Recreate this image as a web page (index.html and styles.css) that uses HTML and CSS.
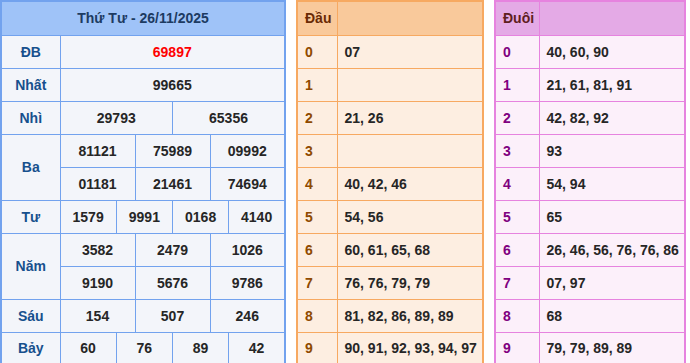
FILE: index.html
```html
<!DOCTYPE html>
<html lang="vi">
<head>
<meta charset="utf-8">
<title>KQXS Thứ Tư - 26/11/2025</title>
<link rel="stylesheet" href="styles.css">
</head>
<body>
<div class="wrap">
  <table class="kq">
    <colgroup>
      <col class="c-label">
      <col span="12">
    </colgroup>
    <tr><th colspan="13" class="title">Thứ Tư - 26/11/2025</th></tr>
    <tr><td class="lbl">ĐB</td><td colspan="12" class="db">69897</td></tr>
    <tr><td class="lbl">Nhất</td><td colspan="12">99665</td></tr>
    <tr><td class="lbl">Nhì</td><td colspan="6">29793</td><td colspan="6">65356</td></tr>
    <tr><td class="lbl" rowspan="2">Ba</td><td colspan="4">81121</td><td colspan="4">75989</td><td colspan="4">09992</td></tr>
    <tr><td colspan="4">01181</td><td colspan="4">21461</td><td colspan="4">74694</td></tr>
    <tr><td class="lbl">Tư</td><td colspan="3">1579</td><td colspan="3">9991</td><td colspan="3">0168</td><td colspan="3">4140</td></tr>
    <tr><td class="lbl" rowspan="2">Năm</td><td colspan="4">3582</td><td colspan="4">2479</td><td colspan="4">1026</td></tr>
    <tr><td colspan="4">9190</td><td colspan="4">5676</td><td colspan="4">9786</td></tr>
    <tr><td class="lbl">Sáu</td><td colspan="4">154</td><td colspan="4">507</td><td colspan="4">246</td></tr>
    <tr><td class="lbl">Bảy</td><td colspan="3">60</td><td colspan="3">76</td><td colspan="3">89</td><td colspan="3">42</td></tr>
  </table>

  <table class="lt dau">
    <colgroup><col class="c-key"><col></colgroup>
    <tr><th>Đầu</th><th></th></tr>
    <tr><td class="key">0</td><td>07</td></tr>
    <tr><td class="key">1</td><td></td></tr>
    <tr><td class="key">2</td><td>21, 26</td></tr>
    <tr><td class="key">3</td><td></td></tr>
    <tr><td class="key">4</td><td>40, 42, 46</td></tr>
    <tr><td class="key">5</td><td>54, 56</td></tr>
    <tr><td class="key">6</td><td>60, 61, 65, 68</td></tr>
    <tr><td class="key">7</td><td>76, 76, 79, 79</td></tr>
    <tr><td class="key">8</td><td>81, 82, 86, 89, 89</td></tr>
    <tr><td class="key">9</td><td>90, 91, 92, 93, 94, 97</td></tr>
  </table>

  <table class="lt duoi">
    <colgroup><col class="c-key"><col></colgroup>
    <tr><th>Đuôi</th><th></th></tr>
    <tr><td class="key">0</td><td>40, 60, 90</td></tr>
    <tr><td class="key">1</td><td>21, 61, 81, 91</td></tr>
    <tr><td class="key">2</td><td>42, 82, 92</td></tr>
    <tr><td class="key">3</td><td>93</td></tr>
    <tr><td class="key">4</td><td>54, 94</td></tr>
    <tr><td class="key">5</td><td>65</td></tr>
    <tr><td class="key">6</td><td>26, 46, 56, 76, 76, 86</td></tr>
    <tr><td class="key">7</td><td>07, 97</td></tr>
    <tr><td class="key">8</td><td>68</td></tr>
    <tr><td class="key">9</td><td>79, 79, 89, 89</td></tr>
  </table>
</div>
</body>
</html>
```
FILE: styles.css
```css
html, body {
  margin: 0;
  padding: 0;
  overflow: hidden;
  background: #ffffff;
}

body {
  font-family: "Liberation Sans", Arial, sans-serif;
  font-size: 14px;
  font-weight: bold;
  color: #262626;
}

.wrap {
  display: flex;
  align-items: flex-start;
  gap: 10px;
}

table {
  border-collapse: collapse;
  table-layout: fixed;
}

th, td {
  height: 33px;
  padding: 0;
  box-sizing: border-box;
}

th {
  height: 34px;
}

/* Results table */
.kq {
  width: 286px;
  border: 2px solid #72a2ee;
  background: #f3f5fa;
}

.kq .c-label {
  width: 59px;
}

.kq th, .kq td {
  border: 1px solid #72a2ee;
  text-align: center;
}

.kq .title {
  background: #9fc3f8;
  color: #1d3b62;
  border-width: 2px 2px 1px 2px;
}

.kq .lbl {
  color: #17508d;
}

.kq .db {
  color: #ff0000;
}

/* Loto tables */
.lt th, .lt td {
  text-align: left;
  padding-left: 7px;
}

.dau {
  width: 188px;
  border: 2px solid #f7a961;
  background: #fdeee1;
}

.dau .c-key {
  width: 40px;
}

.dau th, .dau td {
  border: 1px solid #f7a961;
}

.dau th {
  background: #f9c99b;
  color: #6a2a05;
  border-top-width: 2px;
}

.dau .key {
  color: #8f4a00;
}

.duoi {
  width: 192px;
  border: 2px solid #e683df;
  background: #fcf0fa;
}

.duoi .c-key {
  width: 44px;
}

.duoi th, .duoi td {
  border: 1px solid #e683df;
}

.duoi th {
  background: #e4aae6;
  color: #5e2020;
  border-top-width: 2px;
}

.duoi .key {
  color: #80007f;
}
```
